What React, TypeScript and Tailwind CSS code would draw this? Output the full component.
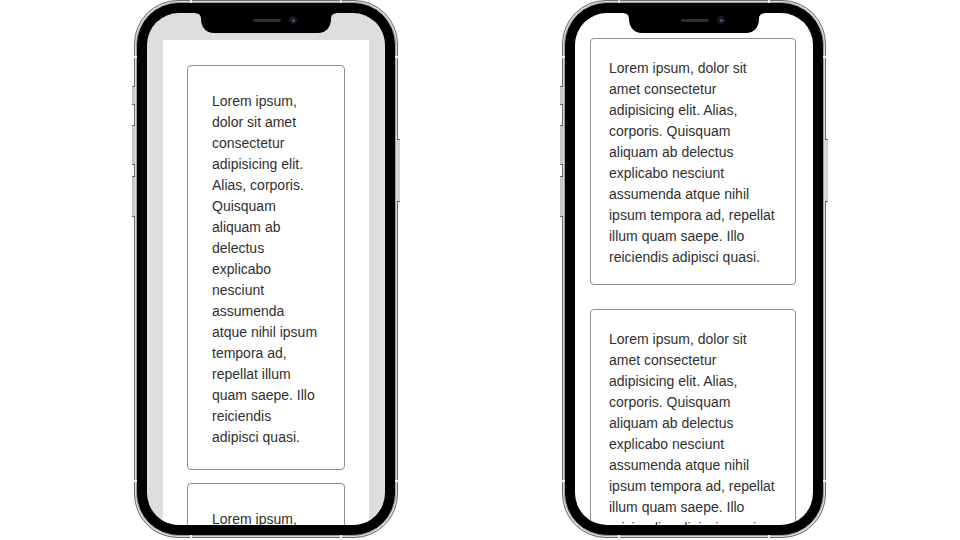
import React from "react";

const leftLines = [
  "Lorem ipsum,",
  "dolor sit amet",
  "consectetur",
  "adipisicing elit.",
  "Alias, corporis.",
  "Quisquam",
  "aliquam ab",
  "delectus",
  "explicabo",
  "nesciunt",
  "assumenda",
  "atque nihil ipsum",
  "tempora ad,",
  "repellat illum",
  "quam saepe. Illo",
  "reiciendis",
  "adipisci quasi.",
];

const rightLines = [
  "Lorem ipsum, dolor sit",
  "amet consectetur",
  "adipisicing elit. Alias,",
  "corporis. Quisquam",
  "aliquam ab delectus",
  "explicabo nesciunt",
  "assumenda atque nihil",
  "ipsum tempora ad, repellat",
  "illum quam saepe. Illo",
  "reiciendis adipisci quasi.",
];

function Lines({ lines }: { lines: string[] }) {
  return (
    <p className="m-0">
      {lines.map((l, i) => (
        <React.Fragment key={i}>
          {l}
          {i < lines.length - 1 && <br />}
        </React.Fragment>
      ))}
    </p>
  );
}

function Notch() {
  return (
    <div className="absolute left-1/2 top-0 z-10 h-[20px] w-[130px] -translate-x-1/2">
      <svg width="146" height="20" viewBox="0 0 146 20" className="absolute -left-[8px] top-0">
        <path
          d="M0 0 H146 C140 0 138 2 138 6 V6 C138 14 133 20 125 20 H21 C13 20 8 14 8 6 C8 2 6 0 0 0 Z"
          fill="#000"
        />
      </svg>
      <div className="relative flex h-full items-start gap-[8px] pl-[52px] pt-[3px]">
        <div className="mt-[3px] h-[3px] w-[28px] rounded-full bg-[#2e2e2e]" />
        <div className="flex h-[8px] w-[8px] items-center justify-center rounded-full bg-[#16181f]">
          <div className="h-[3px] w-[3px] rounded-full bg-[#2f5d8f]" />
        </div>
      </div>
    </div>
  );
}

function Phone({ children, screenBg }: { children: React.ReactNode; screenBg: string }) {
  return (
    <div className="relative h-[538px] w-[264px] shrink-0">
      {/* side buttons */}
      <div className="absolute -left-[2px] top-[86px] h-[19px] w-[3px] rounded-l-[1px] border-y border-[#555] bg-[#c8c8c8]" />
      <div className="absolute -left-[2px] top-[125px] h-[40px] w-[3px] rounded-l-[1px] border-y border-[#555] bg-[#c8c8c8]" />
      <div className="absolute -left-[2px] top-[176px] h-[41px] w-[3px] rounded-l-[1px] border-y border-[#555] bg-[#c8c8c8]" />
      <div className="absolute -right-[2px] top-[139px] h-[63px] w-[3px] rounded-r-[1px] border-y border-[#555] bg-[#d4d4d4]" />
      {/* antenna marks */}
      <div className="absolute left-0 top-[56px] z-20 h-[2px] w-[3px] bg-[#f2f2f2]" />
      <div className="absolute right-0 top-[56px] z-20 h-[2px] w-[3px] bg-[#f2f2f2]" />
      <div className="absolute left-0 bottom-[56px] z-20 h-[2px] w-[3px] bg-[#f2f2f2]" />
      <div className="absolute right-0 bottom-[56px] z-20 h-[2px] w-[3px] bg-[#f2f2f2]" />
      <div className="absolute left-[56px] bottom-0 z-20 h-[3px] w-[2px] bg-[#f2f2f2]" />
      <div className="absolute right-[56px] bottom-0 z-20 h-[3px] w-[2px] bg-[#f2f2f2]" />
      <div className="absolute left-[56px] top-0 z-20 h-[3px] w-[2px] bg-[#f2f2f2]" />
      <div className="absolute right-[56px] top-0 z-20 h-[3px] w-[2px] bg-[#f2f2f2]" />
      <div className="h-full rounded-[44px] border border-[#6c6c6c] bg-[#dcdcdc] p-[1px]">
        <div className="h-full rounded-[43px] border border-[#9c9c9c] bg-black p-[10px]">
          <div className={`relative h-full overflow-hidden rounded-[32px] ${screenBg}`}>
            <Notch />
            {children}
          </div>
        </div>
      </div>
    </div>
  );
}

export default function App() {
  return (
    <div
      className="flex h-[540px] w-[960px] items-start gap-[164px] overflow-hidden bg-white pl-[134px] text-[14px] leading-[21px] text-[#303030]"
      style={{ fontFamily: '"Liberation Sans", Arial, sans-serif' }}
    >
      <Phone screenBg="bg-[#dedede]">
        <div className="mx-[16px] mt-[27px] flex h-full flex-col gap-[13px] bg-white px-[24px] pt-[25px]">
          <div className="w-[158px] shrink-0 rounded-[4px] border border-[#8e8e8e] px-[24px] pb-[21px] pt-[25px]">
            <Lines lines={leftLines} />
          </div>
          <div className="w-[158px] shrink-0 rounded-[4px] border border-[#8e8e8e] px-[24px] pb-[21px] pt-[25px]">
            <Lines lines={leftLines} />
          </div>
        </div>
      </Phone>
      <Phone screenBg="bg-white">
        <div className="flex flex-col gap-[24px] px-[15px] pt-[25px]">
          <div className="w-[206px] shrink-0 rounded-[4px] border border-[#8e8e8e] px-[18px] pb-[16px] pt-[19px]">
            <Lines lines={rightLines} />
          </div>
          <div className="w-[206px] shrink-0 rounded-[4px] border border-[#8e8e8e] px-[18px] pb-[16px] pt-[19px]">
            <Lines lines={rightLines} />
          </div>
        </div>
      </Phone>
    </div>
  );
}
